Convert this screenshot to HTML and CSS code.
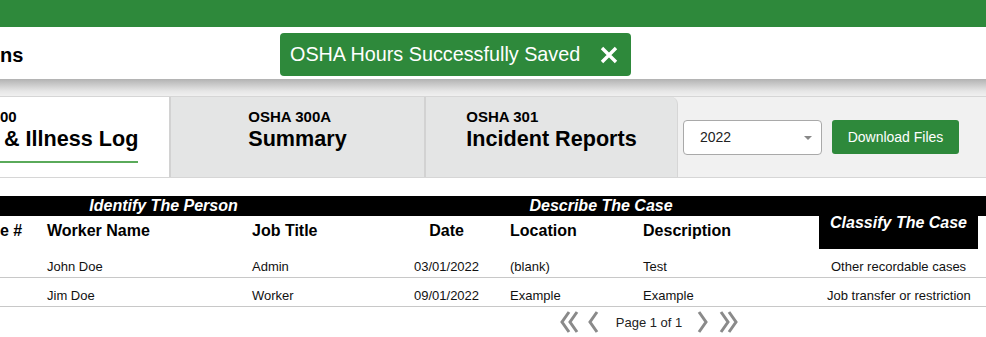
FILE: index.html
```html
<!DOCTYPE html>
<html lang="en">
<head>
  <meta charset="UTF-8">
  <title>OSHA Logs</title>
  <meta name="viewport" content="width=device-width, initial-scale=1.0">
  <link rel="stylesheet" href="styles.css">
</head>
<body>
<div class="topbar"></div>
<div class="header">
  <div class="page-title">ns</div>
  <div class="toast">
    <span>OSHA Hours Successfully Saved</span>
    <button class="toast-close" aria-label="Close">
      <svg width="18" height="18" viewBox="0 0 18 18"><path d="M2 2 L16 16 M16 2 L2 16" stroke="#fff" stroke-width="3.4" stroke-linecap="butt"/></svg>
    </button>
  </div>
</div>
<div class="tabs-area">
  <div class="tab tab-active">
    <div class="tab-inner">
      <div class="tab-code">00</div>
      <div class="tab-name tab-name-cut">&amp; Illness Log</div>
      <div class="tab-underline"></div>
    </div>
  </div>
  <div class="tab">
    <div class="tab-inner">
      <div class="tab-code">OSHA 300A</div>
      <div class="tab-name">Summary</div>
    </div>
  </div>
  <div class="tab tab-last">
    <div class="tab-inner">
      <div class="tab-code">OSHA 301</div>
      <div class="tab-name">Incident Reports</div>
    </div>
  </div>
  <div class="year-select">
    <span>2022</span>
    <span class="caret"></span>
  </div>
  <button class="download-btn">Download Files</button>
</div>

<table class="log-table">
  <colgroup>
    <col style="width:39px"><col style="width:205px"><col style="width:147px"><col style="width:111px">
    <col style="width:133px"><col style="width:184px"><col style="width:159px"><col style="width:8px">
  </colgroup>
  <thead>
    <tr class="group-row">
      <th colspan="3" class="group-identify">Identify The Person</th>
      <th colspan="3" class="group-describe">Describe The Case</th>
      <th rowspan="2" class="group-classify">Classify The Case</th>
      <th class="group-extra"></th>
    </tr>
    <tr class="col-row">
      <th class="first">e #</th>
      <th>Worker Name</th>
      <th>Job Title</th>
      <th class="center">Date</th>
      <th>Location</th>
      <th>Description</th>
      <th></th>
    </tr>
  </thead>
  <tbody>
    <tr>
      <td class="first"></td>
      <td>John Doe</td>
      <td>Admin</td>
      <td class="center">03/01/2022</td>
      <td>(blank)</td>
      <td>Test</td>
      <td class="center">Other recordable cases</td>
      <td></td>
    </tr>
    <tr>
      <td class="first"></td>
      <td>Jim Doe</td>
      <td>Worker</td>
      <td class="center">09/01/2022</td>
      <td>Example</td>
      <td>Example</td>
      <td class="center">Job transfer or restriction</td>
      <td></td>
    </tr>
  </tbody>
</table>

<div class="pager">
  <svg class="pg-icon" width="20" height="24" viewBox="0 0 20 24"><path d="M10 2 L3 12 L10 22 M18 2 L11 12 L18 22" fill="none" stroke="#8a8a8a" stroke-width="3"/></svg>
  <svg class="pg-icon pg-prev" width="12" height="24" viewBox="0 0 12 24"><path d="M10 2 L3 12 L10 22" fill="none" stroke="#8a8a8a" stroke-width="3"/></svg>
  <span class="pg-text">Page 1 of 1</span>
  <svg class="pg-icon pg-next" width="12" height="24" viewBox="0 0 12 24"><path d="M2 2 L9 12 L2 22" fill="none" stroke="#8a8a8a" stroke-width="3"/></svg>
  <svg class="pg-icon pg-last" width="20" height="24" viewBox="0 0 20 24"><path d="M2 2 L9 12 L2 22 M10 2 L17 12 L10 22" fill="none" stroke="#8a8a8a" stroke-width="3"/></svg>
</div>
</body>
</html>
```

FILE: styles.css
```css
body, html {
  margin: 0;
  padding: 0;
  font-family: 'Liberation Sans', Arial, sans-serif;
  background: #fff;
  color: #000;
  overflow: hidden;
}
.topbar {
  height: 27px;
  background: #2e893b;
}
.header {
  position: relative;
  height: 52px;
  background: #fff;
  display: flex;
  align-items: center;
}
.page-title {
  font-size: 20px;
  font-weight: bold;
  line-height: 24px;
  margin-top: 3px;
}
.toast {
  position: absolute;
  left: 280px;
  top: 6px;
  height: 43px;
  width: 351px;
  box-sizing: border-box;
  padding: 0 13px 0 10px;
  background: #2e893b;
  border-radius: 4px;
  color: #fff;
  font-size: 19.8px;
  display: flex;
  align-items: center;
  justify-content: space-between;
}
.toast-close {
  background: none;
  border: none;
  padding: 0;
  width: 18px;
  height: 18px;
  display: flex;
  cursor: pointer;
}
.tabs-area {
  display: flex;
  align-items: stretch;
  height: 80px;
  padding-top: 18px;
  background: linear-gradient(#b2b2b2 0, #e6e6e6 12px, #f0f0f0 17px, #d6d6d6 17px, #d6d6d6 18px, #f1f1f1 18px);
  border-bottom: 1px solid #d6d6d6;
}
.tab {
  width: 253px;
  background: #e4e5e5;
  border-left: 2px solid #d2d2d2;
  display: flex;
  justify-content: center;
}
.tab-active {
  width: 169px;
  background: #fff;
  border-left: none;
  justify-content: flex-start;
}
.tab-last {
  width: 251px;
  border-right: 1px solid #d6d6d6;
  border-top-right-radius: 7px;
}
.tab-inner {
  padding-top: 11px;
}
.tab-code {
  font-size: 15px;
  font-weight: bold;
  line-height: 17px;
}
.tab-name {
  font-size: 21.6px;
  font-weight: bold;
  line-height: 25px;
  margin-top: 1px;
}
.tab-name-cut {
  padding-left: 4px;
}
.tab-underline {
  height: 2px;
  width: 138px;
  background: #5aaa5a;
  margin-top: 10px;
}
.year-select {
  align-self: center;
  margin-left: 5px;
  width: 139px;
  height: 35px;
  box-sizing: border-box;
  background: #fff;
  border: 1px solid #a9a9a9;
  border-radius: 4px;
  display: flex;
  align-items: center;
  justify-content: space-between;
  padding: 0 9px 0 16px;
  font-size: 14px;
  color: #222;
}
.caret {
  width: 0;
  height: 0;
  border-left: 4px solid transparent;
  border-right: 4px solid transparent;
  border-top: 4px solid #888;
  margin-top: 2px;
}
.download-btn {
  align-self: center;
  margin-left: 10px;
  width: 127px;
  height: 34px;
  background: #2e893b;
  color: #fff;
  border: none;
  border-radius: 3px;
  font-family: inherit;
  font-size: 14px;
  padding: 0;
}
.log-table {
  margin-top: 18px;
  width: 986px;
  table-layout: fixed;
  border-collapse: collapse;
  border-spacing: 0;
}
.log-table th, .log-table td {
  padding: 0 8px;
  text-align: left;
  white-space: nowrap;
  overflow: hidden;
}
.log-table .first {
  padding-left: 0;
}
.log-table .center {
  text-align: center;
}
.group-row th {
  background: #000;
  color: #fff;
  font-size: 16px;
  font-style: italic;
  font-weight: bold;
  height: 20px;
  line-height: 20px;
  padding: 0;
  text-align: center;
}
.group-row .group-identify {
  padding-right: 64px;
  text-align: center;
}
.group-row .group-describe {
  padding-right: 8px;
  text-align: center;
}
.group-row .group-classify {
  vertical-align: middle;
  text-align: center;
}
.col-row th {
  height: 29px;
  font-size: 16px;
  font-weight: bold;
  vertical-align: middle;
  padding-bottom: 4px;
}
.log-table td {
  font-size: 13px;
  line-height: 15px;
  padding-top: 10px;
  padding-bottom: 3px;
  color: #111;
  border-bottom: 1px solid #c8c8c8;
}
.pager {
  display: flex;
  justify-content: center;
  align-items: center;
  padding-left: 312px;
  height: 30px;
}
.pg-prev {
  margin-left: 8px;
}
.pg-text {
  margin: 0 15px 0 17px;
  font-size: 13px;
  color: #222;
}
.pg-last {
  margin-left: 10px;
}
```
